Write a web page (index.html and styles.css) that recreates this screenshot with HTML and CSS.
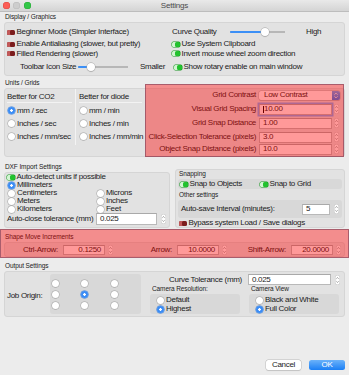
FILE: index.html
```html
<!DOCTYPE html>
<html lang="en">
<head>
<meta charset="utf-8">
<title>Settings</title>
<link rel="stylesheet" href="styles.css">
</head>
<body>
<div class="win">
  <header class="titlebar">
    <div class="lights"><span class="light l-red"></span><span class="light l-gray"></span><span class="light l-green"></span></div>
    <div class="title">Settings</div>
    <div></div>
  </header>

  <main class="content">
    <div class="sl sl-display">Display / Graphics</div>
    <section class="box display">
      <div class="dcol dcol-left">
        <div class="drow dr1"><span class="tg off"></span>Beginner Mode (Simpler Interface)</div>
        <div class="drow dr2"><span class="tg off"></span>Enable Antialiasing (slower, but pretty)</div>
        <div class="drow dr3"><span class="tg off"></span>Filled Rendering (slower)</div>
        <div class="drow dr4"><span class="tb-label">Toolbar Icon Size</span><span class="slider sl-toolbar"><span class="fill"></span><span class="knob"></span></span><span class="tb-end">Smaller</span></div>
      </div>
      <div class="dcol dcol-right">
        <div class="drow dr1"><span class="cq-label">Curve Quality</span><span class="slider sl-curve"><span class="fill"></span><span class="knob"></span></span><span class="cq-end">High</span></div>
        <div class="drow dr2"><span class="tg on"></span>Use System Clipboard</div>
        <div class="drow dr3"><span class="tg on"></span>Invert mouse wheel zoom direction</div>
        <div class="drow dr4 rot"><span class="tg on"></span>Show rotary enable on main window</div>
      </div>
    </section>

    <div class="sl sl-units">Units / Grids</div>
    <section class="box units">
      <div class="ucol ucol1">
        <div class="uhead">Better for CO2</div>
        <div class="urow"><span class="rb on"></span>mm / sec</div>
        <div class="urow"><span class="rb"></span>Inches / sec</div>
        <div class="urow"><span class="rb"></span>Inches / mm/sec</div>
      </div>
      <div class="ucol ucol2">
        <div class="uhead">Better for diode</div>
        <div class="urow"><span class="rb"></span>mm / min</div>
        <div class="urow"><span class="rb"></span>Inches / min</div>
        <div class="urow"><span class="rb"></span>Inches / mm/min</div>
      </div>
      <div class="grid-panel">
        <div class="gp-row"><span class="gp-lbl">Grid Contrast</span><span class="popup"><span class="popup-txt">Low Contrast</span><span class="popup-btn"><svg width="8" height="9" viewBox="0 0 8 9"><path d="M2.4 3.7 L4 2.1 L5.6 3.7 M2.4 5.3 L4 6.9 L5.6 5.3" fill="none" stroke="#fff" stroke-width="0.8"/></svg></span></span></div>
        <div class="gp-row"><span class="gp-lbl">Visual Grid Spacing</span><span class="field gp-field focus"><span class="caret"></span>10.00</span><svg class="stp" width="5" height="10" viewBox="0 0 5 10"><rect x="0.25" y="0.25" width="4.5" height="9.5" rx="2" fill="#fff" stroke="#bdbdbd" stroke-width="0.5"/><path d="M1.4 3.7 L2.5 2.6 L3.6 3.7 M1.4 6.3 L2.5 7.4 L3.6 6.3" fill="none" stroke="#555" stroke-width="0.6"/></svg></div>
        <div class="gp-row"><span class="gp-lbl">Grid Snap Distance</span><span class="field gp-field">1.00</span><svg class="stp" width="5" height="10" viewBox="0 0 5 10"><rect x="0.25" y="0.25" width="4.5" height="9.5" rx="2" fill="#fff" stroke="#bdbdbd" stroke-width="0.5"/><path d="M1.4 3.7 L2.5 2.6 L3.6 3.7 M1.4 6.3 L2.5 7.4 L3.6 6.3" fill="none" stroke="#555" stroke-width="0.6"/></svg></div>
        <div class="gp-row"><span class="gp-lbl">Click-Selection Tolerance (pixels)</span><span class="field gp-field">3.0</span><svg class="stp" width="5" height="10" viewBox="0 0 5 10"><rect x="0.25" y="0.25" width="4.5" height="9.5" rx="2" fill="#fff" stroke="#bdbdbd" stroke-width="0.5"/><path d="M1.4 3.7 L2.5 2.6 L3.6 3.7 M1.4 6.3 L2.5 7.4 L3.6 6.3" fill="none" stroke="#555" stroke-width="0.6"/></svg></div>
        <div class="gp-row last"><span class="gp-lbl">Object Snap Distance (pixels)</span><span class="field gp-field">10.0</span><svg class="stp" width="5" height="10" viewBox="0 0 5 10"><rect x="0.25" y="0.25" width="4.5" height="9.5" rx="2" fill="#fff" stroke="#bdbdbd" stroke-width="0.5"/><path d="M1.4 3.7 L2.5 2.6 L3.6 3.7 M1.4 6.3 L2.5 7.4 L3.6 6.3" fill="none" stroke="#555" stroke-width="0.6"/></svg></div>
        <div class="hl hl-grid"></div>
      </div>
    </section>

    <div class="lower">
      <div class="dxf">
        <div class="sl">DXF Import Settings</div>
        <section class="box dxf-box">
          <div class="xrow auto"><span class="tg on"></span>Auto-detect units if possible</div>
          <div class="xgrid">
            <div class="xrow"><span class="rb on"></span>Millimeters</div><div class="xrow"></div>
            <div class="xrow"><span class="rb"></span>Centimeters</div><div class="xrow"><span class="rb"></span>Microns</div>
            <div class="xrow"><span class="rb"></span>Meters</div><div class="xrow"><span class="rb"></span>Inches</div>
            <div class="xrow"><span class="rb"></span>Kilometers</div><div class="xrow"><span class="rb"></span>Feet</div>
          </div>
          <div class="tol"><span class="tol-lbl">Auto-close tolerance (mm)</span><span class="field tol-field">0.025</span><svg class="stp" width="5" height="10" viewBox="0 0 5 10"><rect x="0.25" y="0.25" width="4.5" height="9.5" rx="2" fill="#fff" stroke="#bdbdbd" stroke-width="0.5"/><path d="M1.4 3.7 L2.5 2.6 L3.6 3.7 M1.4 6.3 L2.5 7.4 L3.6 6.3" fill="none" stroke="#555" stroke-width="0.6"/></svg></div>
        </section>
      </div>
      <section class="box misc">
        <div class="sl">Snapping</div>
        <div class="sub snap">
          <div class="xrow"><span class="tg on"></span>Snap to Objects</div>
          <div class="xrow"><span class="tg on"></span>Snap to Grid</div>
        </div>
        <div class="sl sl-other">Other settings</div>
        <div class="sub other"><span>Auto-save Interval (minutes):</span><span class="field as-field">5</span><svg class="stp" width="5" height="10" viewBox="0 0 5 10"><rect x="0.25" y="0.25" width="4.5" height="9.5" rx="2" fill="#fff" stroke="#bdbdbd" stroke-width="0.5"/><path d="M1.4 3.7 L2.5 2.6 L3.6 3.7 M1.4 6.3 L2.5 7.4 L3.6 6.3" fill="none" stroke="#555" stroke-width="0.6"/></svg></div>
        <div class="xrow bypass"><span class="tg off"></span>Bypass system Load / Save dialogs</div>
      </section>
    </div>

    <div class="shape">
      <div class="sl">Shape Move Increments</div>
      <section class="box shape-box">
        <div class="sm-cell"><span class="sm-lbl">Ctrl-Arrow:</span><span class="field sm-field">0.1250</span><svg class="stp" width="5" height="10" viewBox="0 0 5 10"><rect x="0.25" y="0.25" width="4.5" height="9.5" rx="2" fill="#fff" stroke="#bdbdbd" stroke-width="0.5"/><path d="M1.4 3.7 L2.5 2.6 L3.6 3.7 M1.4 6.3 L2.5 7.4 L3.6 6.3" fill="none" stroke="#555" stroke-width="0.6"/></svg></div>
        <div class="sm-cell"><span class="sm-lbl">Arrow:</span><span class="field sm-field">10.0000</span><svg class="stp" width="5" height="10" viewBox="0 0 5 10"><rect x="0.25" y="0.25" width="4.5" height="9.5" rx="2" fill="#fff" stroke="#bdbdbd" stroke-width="0.5"/><path d="M1.4 3.7 L2.5 2.6 L3.6 3.7 M1.4 6.3 L2.5 7.4 L3.6 6.3" fill="none" stroke="#555" stroke-width="0.6"/></svg></div>
        <div class="sm-cell"><span class="sm-lbl">Shift-Arrow:</span><span class="field sm-field">20.0000</span><svg class="stp" width="5" height="10" viewBox="0 0 5 10"><rect x="0.25" y="0.25" width="4.5" height="9.5" rx="2" fill="#fff" stroke="#bdbdbd" stroke-width="0.5"/><path d="M1.4 3.7 L2.5 2.6 L3.6 3.7 M1.4 6.3 L2.5 7.4 L3.6 6.3" fill="none" stroke="#555" stroke-width="0.6"/></svg></div>
      </section>
      <div class="hl hl-shape"></div>
    </div>

    <div class="sl sl-output">Output Settings</div>
    <section class="box output">
      <div class="origin">
        <span class="jo-lbl">Job Origin:</span>
        <div class="jo-grid">
          <span class="rb"></span><span class="rb"></span><span class="rb"></span>
          <span class="rb"></span><span class="rb on"></span><span class="rb"></span>
          <span class="rb"></span><span class="rb"></span><span class="rb"></span>
        </div>
      </div>
      <div class="out-right">
        <div class="ct-row"><span class="ct-lbl">Curve Tolerance (mm)</span><span class="field ct-field">0.025</span><svg class="stp" width="5" height="10" viewBox="0 0 5 10"><rect x="0.25" y="0.25" width="4.5" height="9.5" rx="2" fill="#fff" stroke="#bdbdbd" stroke-width="0.5"/><path d="M1.4 3.7 L2.5 2.6 L3.6 3.7 M1.4 6.3 L2.5 7.4 L3.6 6.3" fill="none" stroke="#555" stroke-width="0.6"/></svg></div>
        <div class="cams">
          <div class="cam">
            <div class="cam-lbl">Camera Resolution:</div>
            <div class="cam-box">
              <div class="crow"><span class="rb"></span>Default</div>
              <div class="crow"><span class="rb on"></span>Highest</div>
            </div>
          </div>
          <div class="cam">
            <div class="cam-lbl">Camera View</div>
            <div class="cam-box">
              <div class="crow"><span class="rb"></span>Black and White</div>
              <div class="crow"><span class="rb on"></span>Full Color</div>
            </div>
          </div>
        </div>
      </div>
    </section>
  </main>

  <footer class="footer">
    <span class="btn btn-cancel">Cancel</span>
    <span class="btn btn-ok">OK</span>
  </footer>
</div>
</body>
</html>
```

FILE: styles.css
```css
* { box-sizing: border-box; margin: 0; padding: 0; }
html, body { width: 349px; height: 375px; }
body {
  overflow: hidden;
  background: #ececec;
  font-family: "Liberation Sans", Arial, sans-serif;
  font-size: 8px;
  letter-spacing: -0.3px;
  line-height: 1;
  color: #1c1c1c;
}
.win { display: flex; flex-direction: column; height: 375px; }

/* title bar */
.titlebar {
  height: 12px; flex: none;
  display: grid; grid-template-columns: 1fr auto 1fr; align-items: center;
  background: linear-gradient(#e9e9e9, #d4d4d4);
  border-bottom: 1px solid #bdbdbd;
}
.lights { display: flex; gap: 3.5px; padding-left: 2.5px; }
.light { width: 7px; height: 7px; border-radius: 50%; }
.l-red { background: #fc5f57; box-shadow: inset 0 0 0 0.5px #de4640; }
.l-gray { background: #cdcdcd; box-shadow: inset 0 0 0 0.5px #bababa; }
.l-green { background: #33c748; box-shadow: inset 0 0 0 0.5px #26a934; }
.title { font-size: 8px; color: #4a4a4a; letter-spacing: -0.2px; }

.content { flex: none; display: flex; flex-direction: column; padding: 0 4px; }

/* section labels and boxes */
.sl {
  font-size: 6.5px; letter-spacing: -0.1px;
  height: 8px; line-height: 8px;
  padding-left: 1px; margin-bottom: 1px;
  color: #222; white-space: nowrap;
}
.sl-display { margin-top: 1px; }
.sl-units { margin-top: 3px; }
.sl-output { margin-top: 4px; }
.box { background: #e2e2e2; border: 1px solid #d5d5d5; border-radius: 3px; }
.sub { background: #d8d8d8; border-radius: 3px; }

/* toggles, radios */
.tg { flex: none; width: 8px; height: 5px; border-radius: 1.5px; margin-right: 1.5px; }
.tg.off { background: #7b1c1c; box-shadow: inset 3px 0 0 #c25959; }
.tg.on { background: #22c22e; box-shadow: inset 3px 0 0 #d2f4d2, 0 0 0 0.5px #179620; }
.rb {
  flex: none; width: 7px; height: 7px; border-radius: 50%;
  background: #fff;
  box-shadow: 0 0 0 0.5px #a2a2a2, 0 0.5px 0.6px rgba(0,0,0,.15);
  margin-left: 0.5px; margin-right: 2.5px;
}
.rb.on { background: radial-gradient(circle, #fff 0 1.1px, #3a8cf5 1.5px); box-shadow: 0 0 0 0.5px #2a78de; }

/* fields */
.field {
  flex: none; height: 11px;
  display: flex; align-items: center;
  background: #fff;
  border: 0.5px solid #b9b9b9; border-top-color: #a9a9a9;
  padding: 0 3px; white-space: nowrap;
}
.stp { flex: none; display: block; margin-left: 2px; }
.focus { box-shadow: 0 0 0 1.5px #78acf5; }
.caret { width: 0.6px; height: 7px; background: #000; margin-right: 0.5px; }

/* display section */
.display { height: 54px; display: grid; grid-template-columns: 167px 1fr; padding-top: 4px; }
.dcol { display: flex; flex-direction: column; }
.dcol-left { padding-left: 2px; }
.drow { display: flex; align-items: center; white-space: nowrap; }
.dr1 { height: 10px; }
.dr2 { height: 10px; margin-top: 2px; }
.dr3 { height: 9px; }
.dr4 { height: 10px; margin-top: 4px; }
.rot { padding-left: 2px; }
.tb-label { margin-left: 13px; width: 58px; }
.tb-end { margin-left: 12px; }
.cq-label { width: 58px; }
.cq-end { margin-left: 21px; }

.slider {
  position: relative; display: block; flex: none; height: 8px;
  background: linear-gradient(#b7b7b7, #b7b7b7) no-repeat 0 50% / 100% 2px;
}
.sl-toolbar { width: 50px; }
.sl-curve { width: 55px; }
.slider .fill { position: absolute; left: 0; top: 3px; height: 2px; background: #3b8ff6; border-radius: 1px; }
.sl-toolbar .fill { width: 13px; }
.sl-curve .fill { width: 35px; }
.knob {
  position: absolute; top: 0; width: 8px; height: 8px; border-radius: 50%;
  background: #fff; box-shadow: 0 0 0 0.5px #a5a5a5, 0 0.5px 1px rgba(0,0,0,.3);
}
.sl-toolbar .knob { left: 9px; }
.sl-curve .knob { left: 31px; }

/* units section */
.units { height: 69px; display: flex; align-items: flex-start; }
.ucol { display: flex; flex-direction: column; flex: none; }
.ucol1 { width: 71px; padding: 0 3px 2px 2px; border-right: 1px solid #f3f3f3; }
.ucol2 { width: 69px; padding: 0 3px; }
.uhead { margin-top: 2px; height: 12px; display: flex; align-items: center; border-bottom: 1px solid #f3f3f3; white-space: nowrap; }
.urow { height: 13px; display: flex; align-items: center; white-space: nowrap; }
.uhead + .urow { margin-top: 1px; }

.grid-panel { position: relative; flex: 1; align-self: stretch; display: flex; flex-direction: column; gap: 2px; }
.gp-row { height: 12px; display: flex; align-items: center; }
.gp-row.last { margin-top: -2px; }
.gp-lbl { flex: none; width: 111px; margin-right: 3px; text-align: right; white-space: nowrap; }
.gp-field { width: 73px; }
.popup {
  flex: none; width: 81px; height: 9px;
  display: flex; align-items: center;
  background: #fff; border-radius: 2px;
  box-shadow: 0 0 0 0.5px #b3b3b3, 0 0.5px 0.8px rgba(0,0,0,.2);
}
.popup-txt { flex: 1; padding-left: 5px; white-space: nowrap; }
.popup-btn {
  width: 8px; height: 9px; border-radius: 0 2px 2px 0;
  background: linear-gradient(#62a9fa, #2a7ff3);
  display: flex; align-items: center; justify-content: center;
}
.popup-btn svg { display: block; }

/* highlight overlays */
.hl {
  position: absolute; pointer-events: none;
  background: rgba(255, 0, 0, .4);
  border: 1px solid rgba(95, 45, 75, .5);
}
.hl-grid { top: -5px; bottom: -1px; left: 0; right: 0; }
.hl-shape { top: 0; bottom: 0; left: -4px; right: -4px; }

/* lower area */
.lower { display: flex; gap: 5px; margin-top: 6px; align-items: flex-start; }
.dxf { width: 166px; flex: none; }
.dxf-box { padding: 0 3px 2px 2px; }
.xrow { height: 8px; display: flex; align-items: center; white-space: nowrap; }
.xgrid { display: grid; grid-template-columns: 89px 1fr; }
.tol { height: 12px; display: flex; align-items: center; }
.tol-lbl { width: 89px; white-space: nowrap; }
.tol-field { width: 61px; height: 12px; }
.tol .stp { margin-left: 4px; }

.misc { flex: 1; margin-top: 6px; padding: 0 2px; }
.snap { height: 10px; display: grid; grid-template-columns: 80px 1fr; align-items: center; padding-left: 2px; }
.sl-other { margin-top: 2px; }
.other { height: 18px; display: flex; align-items: center; padding: 0 3px; white-space: nowrap; }
.as-field { width: 28px; margin-left: auto; }
.other .stp { margin-left: 4px; }
.bypass { margin-top: 1px; padding-left: 1px; }

/* shape move */
.shape { position: relative; margin-top: 1px; padding: 4px 0 1px; }
.shape-box { display: grid; grid-template-columns: 108px 114px 114px; padding: 2px 3px 1px 0; }
.sm-cell { display: flex; align-items: center; height: 10px; }
.sm-lbl { flex: 1; text-align: right; margin-right: 5px; white-space: nowrap; }
.sm-field { width: 42px; height: 10px; justify-content: flex-end; }
.sm-cell .stp { margin-left: 3px; }

/* output */
.output { display: flex; padding: 0 3px 2px 2px; }
.origin { display: flex; align-items: flex-start; }
.jo-lbl { width: 43px; height: 8px; line-height: 8px; margin-top: 20px; white-space: nowrap; }
.jo-grid {
  margin-top: 2px; width: 91px; height: 40px;
  background: #d8d8d8; border-radius: 3px;
  display: grid; grid-template-columns: repeat(3, 29.5px); grid-auto-rows: 11px;
  align-items: center; padding: 4px 0 3px 1px;
}
.out-right { margin-left: auto; width: 191px; display: flex; flex-direction: column; }
.ct-row { margin-top: 2px; height: 11px; display: flex; align-items: center; }
.ct-lbl { width: 92px; text-align: right; white-space: nowrap; }
.ct-field { width: 83px; margin-left: 6px; }
.ct-row .stp { margin-left: 4px; }
.cams { display: flex; gap: 9px; }
.cam { width: 90px; }
.cam-lbl {
  font-size: 6.5px; letter-spacing: -0.1px;
  height: 7px; line-height: 7px; padding-left: 2px; margin-bottom: 2px;
  white-space: nowrap; color: #222;
}
.cam-box { height: 20px; background: #d8d8d8; border-radius: 3px; padding: 1.5px 0 0 6px; }
.crow { height: 9px; display: flex; align-items: center; white-space: nowrap; }

/* footer */
.footer { margin-top: auto; display: flex; justify-content: flex-end; gap: 8px; padding: 0 4px 5px 0; }
.btn { height: 10px; display: flex; align-items: center; justify-content: center; border-radius: 2.5px; }
.btn-cancel { width: 35px; background: #fff; box-shadow: 0 0 0 0.5px #bdbdbd, 0 0.5px 1px rgba(0,0,0,.15); }
.btn-ok { width: 36px; background: linear-gradient(#6bb2fa, #1b7ff5); color: #fff; }
```
